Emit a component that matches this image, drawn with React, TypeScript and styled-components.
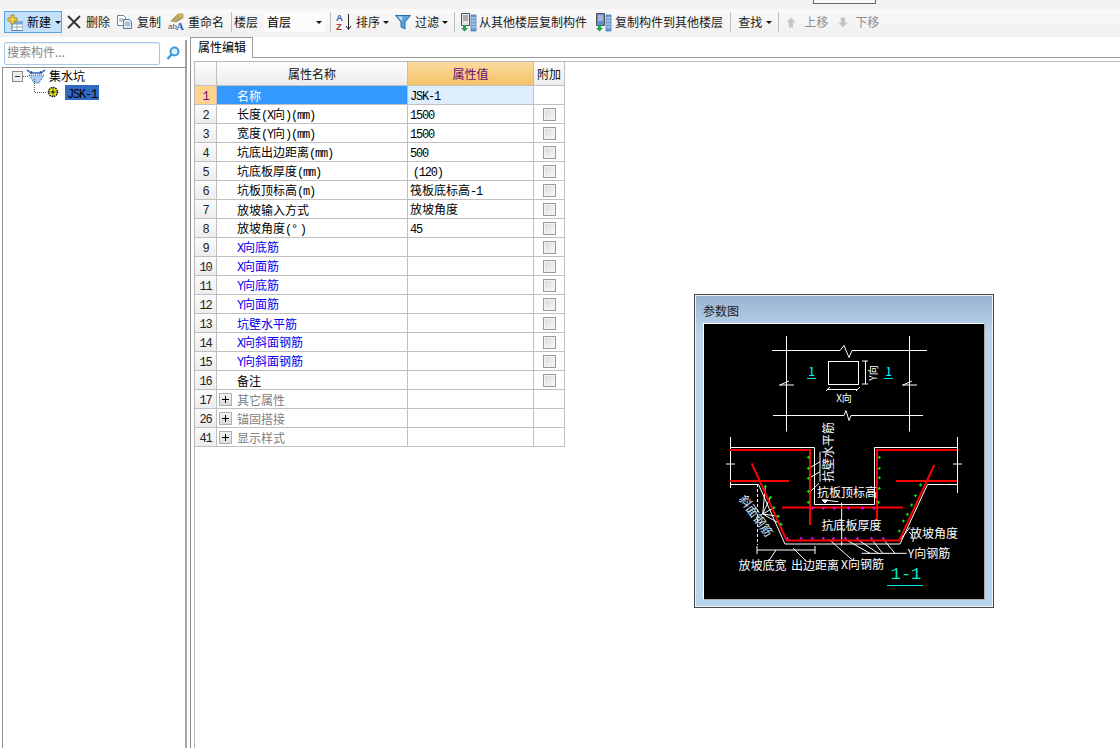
import React from "react";
import styled, { createGlobalStyle } from "styled-components";

const CJK = `"Noto Sans CJK SC", "Liberation Sans", sans-serif`;

const Global = createGlobalStyle`
  html, body { margin: 0; padding: 0; background: #fff; }
  #root { width: 1120px; height: 748px; overflow: hidden; }
  * { box-sizing: border-box; }
`;

const Page = styled.div`
  width: 1120px; height: 748px; display: flex; flex-direction: column;
  font: 12px/16px ${CJK}; color: #000; background: #fff; overflow: hidden;
`;
const TopStrip = styled.div`
  height: 9px; background: #f2f2f2; flex: none; padding-left: 813px;
`;
const WindowTab = styled.div`
  width: 63px; height: 4px; border: 1px solid #666; border-top: 0; background: #f8f8f8;
`;
const Toolbar = styled.div`
  height: 28px; flex: none; display: flex; align-items: center; padding-bottom: 2px;
  background: linear-gradient(#f9f9f9, #f0f0f0);
`;
const NewButton = styled.div`
  width: 58px; height: 22px; margin-left: 4px; display: flex; align-items: center; gap: 4px;
  padding-left: 2px; border: 1px solid #5aa2e0; background: #c4e1fb;
`;
const Tool = styled.div<{ $ml: number; $gap: number; $off?: boolean }>`
  display: flex; align-items: center; flex: none;
  margin-left: ${(p) => p.$ml}px; gap: ${(p) => p.$gap}px;
  color: ${(p) => (p.$off ? "#8e8e8e" : "#1a1a1a")};
  white-space: nowrap;
`;
const Caret = styled.span<{ $ml?: number }>`
  width: 0; height: 0; flex: none; margin-left: ${(p) => p.$ml ?? 0}px; margin-top: 1px;
  border-left: 3px solid transparent; border-right: 3px solid transparent; border-top: 3px solid #111;
`;
const Sep = styled.span<{ $ml: number }>`
  width: 1px; height: 20px; flex: none; margin-left: ${(p) => p.$ml}px; background: #bdbdbd;
`;
const Combo = styled.div`
  width: 62px; height: 20px; margin-left: 6px; padding: 0 4px 0 3px; flex: none;
  display: flex; align-items: center; justify-content: space-between; background: #fcfcfc;
`;
const Body = styled.div`
  flex: 1; display: flex; min-height: 0;
`;
const LeftColumn = styled.div`
  width: 187px; flex: none; margin-top: 3px; display: flex; flex-direction: column;
  border-right: 2px solid #a2a2a2;
`;
const SearchRow = styled.div`
  height: 25px; flex: none; display: flex; align-items: center; padding: 2px 0 0 4px; gap: 6px;
`;
const SearchBox = styled.div`
  width: 156px; height: 23px; padding: 0 0 3px 2px; display: flex; align-items: center;
  border: 1px solid #a8c8e6; border-radius: 2px; color: #868686; font-size: 12px;
  box-shadow: inset 0 1px 1px #e6eef6;
`;
const Tree = styled.div`
  flex: 1; margin: 2px 0 0 2px; border-top: 1px solid #8f8f8f; border-left: 1px solid #8f8f8f;
  display: flex; flex-direction: column;
`;
const TreeRow = styled.div<{ $pl: number }>`
  display: flex; align-items: center; padding-left: ${(p) => p.$pl}px; flex: none;
  height: ${(p) => (p.$pl > 20 ? 15 : 17)}px; white-space: nowrap;
`;
const TreeName = styled.span`
  padding-bottom: 1px; font-size: 12px;
`;
const Selected = styled.span`
  margin-left: 6px; width: 34px; height: 15px; line-height: 15px; padding-left: 2px; background: #316ac5; color: #000;
`;
const Main = styled.div`
  flex: 1; margin-left: 3px; position: relative; display: flex; flex-direction: column; min-width: 0;
`;
const TabStrip = styled.div`
  height: 21px; flex: none; display: flex; align-items: flex-end;
  border-bottom: 1px solid #9a9a9a;
`;
const Tab = styled.div`
  width: 63px; height: 21px; margin-bottom: -1px; padding-left: 7px; line-height: 18px;
  background: #fff; border: 1px solid #9a9a9a; border-bottom: 0; font-size: 12px;
`;
const Pane = styled.div`
  flex: 1; border-left: 1px solid #8a8a8a; padding: 3px 0 0 3px; min-height: 0; display: flex;
`;
const Sheet = styled.div`
  flex: 1; border-top: 1px solid #b8b8b8; border-left: 1px solid #b8b8b8; background: #fff;
`;
const Grid = styled.table`
  border-collapse: separate; border-spacing: 0; table-layout: fixed; width: 370px;
`;
const HeadCell = styled.th<{ $w: number; $hot?: boolean }>`
  width: ${(p) => p.$w}px; height: 24px; padding: 0; font-weight: 400; font-size: 12px;
  border-right: 1px solid #c0c0c0; border-bottom: 1px solid #c0c0c0;
  color: ${(p) => (p.$hot ? "#6a0a78" : "#111")};
  background: ${(p) => (p.$hot ? "linear-gradient(#fbdba0, #f3c266)" : "linear-gradient(#fdfdfd, #ececec)")};
`;
const NumCell = styled.td<{ $hot?: boolean }>`
  height: 19px; padding: 0; text-align: center; line-height: 14px;
  border-right: 1px solid #c0c0c0; border-bottom: 1px solid #c0c0c0;
  color: ${(p) => (p.$hot ? "#6a0a78" : "#222")};
  background: ${(p) => (p.$hot ? "#fdd38d" : "linear-gradient(#fbfbfb, #ededed)")};
`;
const NameCell = styled.td<{ $tone: "plain" | "link" | "group" | "active" }>`
  height: 19px; padding: 1px 0 0 ${(p) => (p.$tone === "group" ? 2 : 20)}px; line-height: 14px; white-space: pre;
  border-right: 1px solid #c0c0c0; border-bottom: 1px solid #c0c0c0;
  background: ${(p) => (p.$tone === "active" ? "#3399ff" : "#fff")};
  color: ${(p) => ({ plain: "#000", link: "#0000ee", group: "#808080", active: "#fff" }[p.$tone])};
`;
const GroupLabel = styled.div`
  display: flex; align-items: center; gap: 5px; height: 15px;
`;
const Expander = styled.span`
  width: 13px; height: 13px; flex: none; position: relative; border: 1px solid #b0b0b0;
  background: linear-gradient(#f4f4f4, #dcdcdc);
  &::before { content: ""; position: absolute; left: 2px; top: 5px; width: 7px; height: 1px; background: #000; }
  &::after { content: ""; position: absolute; left: 5px; top: 2px; width: 1px; height: 7px; background: #000; }
`;
const ValueCell = styled.td<{ $active?: boolean }>`
  height: 19px; padding: 0 0 0 2px; line-height: 14px; white-space: pre; color: #000;
  border-right: 1px solid #c0c0c0; border-bottom: 1px solid #c0c0c0;
  background: ${(p) => (p.$active ? "#deeeff" : "#fff")};
`;
const ExtraCell = styled.td`
  height: 19px; padding: 0; text-align: center; vertical-align: middle;
  border-right: 1px solid #c0c0c0; border-bottom: 1px solid #c0c0c0;
`;
const Check = styled.span`
  display: block; width: 13px; height: 13px; margin: 1px auto 0; border: 1px solid #9a9a9a;
  background: linear-gradient(135deg, #d8d8d8, #fafafa); box-shadow: inset 0 0 0 1px #f4f4f4;
`;
const Latin = styled.span`
  font-family: "Liberation Mono", monospace; font-size: 12px; letter-spacing: -1.2px; line-height: 1;
`;
const ParamWindow = styled.div`
  position: absolute; left: 504px; top: 257px; width: 300px; height: 314px;
  padding: 0 8px 8px; display: flex; flex-direction: column;
  border: 1px solid #4c4c4c; box-shadow: inset 0 0 0 1px #e8f2fb;
  background: linear-gradient(#98b3d2, #bad3ea 12%, #b9d5ee);
`;
const ParamTitle = styled.div`
  height: 28px; flex: none; line-height: 32px; color: #222; font-size: 12px;
`;
const ParamView = styled.div`
  flex: 1; background: #000; border: 1px solid; border-color: #fff #a8a8a8 #a8a8a8 #fff;
`;
const Drawing = styled.svg`
  display: block; width: 100%; height: 100%;
`;
const DrawText = styled.text`
  font-family: ${CJK}; font-size: 12px; fill: #fff; text-anchor: middle;
`;

const Txt = ({ children }: { children: string }) => (
  <>
    {children.split(/([\x21-\x7e\u00b0]+)/).map((s, i) =>
      /^[\x21-\x7e\u00b0]+$/.test(s) ? <Latin key={i}>{s}</Latin> : s
    )}
  </>
);

const IconNew = () => (
  <svg width="16" height="17" viewBox="0 0 16 17">
    <rect x="5" y="8" width="11" height="8.5" fill="#fff" stroke="#5b7fa8" />
    <rect x="5" y="8" width="11" height="2.5" fill="#7ba4d4" />
    <path d="M5 13h11M10 10v6" stroke="#9ab" />
    <path d="M4 1h3v3h3v3H7v3H4V7H1V4h3z" fill="#f7d64a" stroke="#a98a1c" />
  </svg>
);
const IconX = () => (
  <svg width="14" height="14" viewBox="0 0 14 14">
    <path d="M1 1l12 12M13 1L1 13" stroke="#333" strokeWidth="1.8" />
  </svg>
);
const IconCopy = () => (
  <svg width="15" height="14" viewBox="0 0 15 14">
    <path d="M.5.5h6l2 2v8h-8z" fill="#fff" stroke="#6d7f96" />
    <path d="M6.5 4.5h6l2 2v7h-8z" fill="#dde8f5" stroke="#5b7fa8" />
    <path d="M2 4h4M2 6h4M8 8h5M8 10h5" stroke="#7d93ad" />
  </svg>
);
const IconRename = () => (
  <svg width="16" height="18" viewBox="0 0 16 18">
    <path d="M3 8L10 1h5v4l-7 4z" fill="#d9b44a" stroke="#8a7a40" strokeWidth=".6" />
    <path d="M5 7l6-4M8 8l5-3" stroke="#6f8f9a" />
    <text x="0" y="16" fontSize="8" fontFamily="Liberation Sans" fill="#555">ab</text>
    <text x="8" y="17" fontSize="11" fontWeight="700" fontFamily="Liberation Serif" fill="#2b62b0">A</text>
  </svg>
);
const IconSort = () => (
  <svg width="17" height="18" viewBox="0 0 17 18">
    <text x="0" y="8" fontSize="9.5" fontWeight="700" fontFamily="Liberation Sans" fill="#2b62b0">A</text>
    <text x="0" y="17" fontSize="9.5" fontWeight="700" fontFamily="Liberation Sans" fill="#a33a3a">Z</text>
    <path d="M12.500 1v15M10 13l2.500 3.500L15 13" fill="none" stroke="#222" />
  </svg>
);
const IconFunnel = () => (
  <svg width="16" height="16" viewBox="0 0 16 16">
    <path d="M.5 1.500h15L10 8v7L6 13V8z" fill="#5ba3dc" stroke="#2d6ea6" />
    <path d="M2.500 2.500h5L7 7z" fill="#bfe0f6" />
  </svg>
);
const IconFloors = ({ down }: { down?: boolean }) => (
  <svg width="17" height="19" viewBox="0 0 17 19">
    <path d="M1.500.5h8v12h-8z" fill={down ? "#5f8fd0" : "#e4e4e4"} stroke="#555" />
    <path d="M3 3h5M3 5h5M3 7h5" stroke={down ? "#dde" : "#777"} />
    <path d="M11 2h5v16h-5z" fill="#6f9fd8" stroke="#3c6ba8" strokeWidth=".7" />
    <path d="M11 5h5M11 8h5M11 11h5M11 14h5" stroke="#fff" strokeWidth=".6" />
    <path d="M3 12h3v3h2l-3.500 3.500L1 15h2z" fill="#2aa14a" />
  </svg>
);
const IconMove = ({ up }: { up?: boolean }) => (
  <svg width="10" height="11" viewBox="0 0 10 11">
    <path d={up ? "M5 .5L9.500 5.500H7v5H3v-5H.5z" : "M5 10.500L9.500 5.500H7v-5H3v5H.5z"} fill="#c4c4c4" stroke="#d8d8d8" strokeWidth=".5" />
  </svg>
);
const IconSearch = () => (
  <svg width="14" height="15" viewBox="0 0 14 15">
    <circle cx="8.500" cy="5.500" r="4" fill="#d8eefc" stroke="#3f97d8" strokeWidth="2" />
    <path d="M5.500 8.500L1.500 13" stroke="#3f97d8" strokeWidth="2.400" />
  </svg>
);
const TreeBranch = () => (
  <svg width="37" height="17" viewBox="0 0 37 17" style={{ flex: "none" }}>
    <rect x=".5" y="3.500" width="10" height="10" fill="#eee" stroke="#888" />
    <path d="M3 8.500h5" stroke="#333" />
    <path d="M11 8.500h5" stroke="#666" strokeDasharray="1 1" />
    <path d="M15 2l4 3h10l4-3" fill="none" stroke="#2a5fb0" strokeWidth="1.500" />
    <path d="M19.500 3v3M28.500 3v3" stroke="#2a5fb0" strokeWidth="1.500" />
    <path d="M17 7h15l-5 8h-5z" fill="#a9cdf0" stroke="#2a5fb0" strokeDasharray="1 1" />
  </svg>
);
const TreeLeaf = () => (
  <svg width="25" height="15" viewBox="0 0 25 15" overflow="visible" style={{ flex: "none" }}>
    <path d="M.5-6v13.500H12" fill="none" stroke="#555" strokeDasharray="1 1" />
    <circle cx="19" cy="7" r="4.500" fill="#f6ec1e" stroke="#222" strokeDasharray="1.500 .8" strokeWidth="1.600" />
    <circle cx="19" cy="7" r="1.500" fill="#333" />
    <path d="M14 7h10M19 2v10" stroke="#222" strokeWidth=".6" />
  </svg>
);

type Row = [string, string, string, "plain" | "link" | "active", boolean];
const rows: Row[] = [
  ["1", "名称", "JSK-1", "active", false],
  ["2", "长度(X向)(mm)", "1500", "plain", true],
  ["3", "宽度(Y向)(mm)", "1500", "plain", true],
  ["4", "坑底出边距离(mm)", "500", "plain", true],
  ["5", "坑底板厚度(mm)", " (120)", "plain", true],
  ["6", "坑板顶标高(m)", "筏板底标高-1", "plain", true],
  ["7", "放坡输入方式", "放坡角度", "plain", true],
  ["8", "放坡角度(° )", "45", "plain", true],
  ["9", "X向底筋", "", "link", true],
  ["10", "X向面筋", "", "link", true],
  ["11", "Y向底筋", "", "link", true],
  ["12", "Y向面筋", "", "link", true],
  ["13", "坑壁水平筋", "", "link", true],
  ["14", "X向斜面钢筋", "", "link", true],
  ["15", "Y向斜面钢筋", "", "link", true],
  ["16", "备注", "", "plain", true],
];
const groups = [["17", "其它属性"], ["26", "锚固搭接"], ["41", "显示样式"]];

const z = (x: number, y: number) => `${690 + x / 3} ${440 + y / 3}`;
const greens = [[355,52],[355,85],[355,115],[355,154],[355,187],[568,52],[568,85],[568,113],[568,145],[565,187],[226,139],[241,172],[252,203],[265,229],[273,253],[691,135],[676,167],[665,195],[652,223],[640,243],[628,273]];
const pinks = [[367,205],[400,205],[433,205],[475,205],[517,205],[552,205],[292,295],[333,295],[367,295],[400,295],[430,295],[466,295],[502,295],[545,295],[580,295]];
const Plus = ({ at, color }: { at: number[]; color: string }) => {
  const x = 690 + at[0] / 3, y = 440 + at[1] / 3;
  return <path d={`M${x - 1.5} ${y}h3M${x} ${y - 1.5}v3`} stroke={color} fill="none" />;
};
const leaders = [
  [390,35,390,125],[390,65,357,85],[390,95,357,115],[387,130,357,158],
  [218,222,226,139],[218,222,241,172],[218,222,252,203],[218,222,265,229],[218,222,273,253],
  [515,340,650,340],[466,298,540,340],[502,298,565,340],[545,298,578,340],[580,298,615,340],
  [417,298,487,360],[455,188,455,316],[400,180,445,185],
  [258,330,235,365],[310,325,350,365],[630,300,660,262],
];

const ParamDrawing = () => (
  <Drawing viewBox="704 324 280 275">
    <g stroke="#fff" fill="none" strokeWidth="1">
      <path d="M772 350.500H840l4-5 5 12 3-7H927M773 415.500H844l2-5 3 10 2-5H923" />
      <path d="M786.500 336V431.500M909.500 336V431.500M779 385h15M902 385h15M780 385l9-4M903 385l9-4" />
      <rect x="828.500" y="361.500" width="30" height="23" />
      <path d="M828 389.500h30M826 391l4-4M856 391l4-4M865.500 361v23M862 361h6M862 384h6" />
      <path d="M730.500 437V488M730.500 447.500H814.500V504.500H874.500V447.500H957.500M957.500 437V493" />
      <path d="M730 484.500H758.500L785 544H900L927.500 484.500H957" />
      <path d="M726 464h9M953 464h9" strokeWidth="1" />
      <path d="M757.500 484V545" strokeDasharray="3 2" />
      <path d="M757 550H815M757 546v8M815 546v8" />
      {leaders.map((l, i) => (
        <path key={i} d={`M${z(l[0], l[1])}L${z(l[2], l[3])}`} />
      ))}
      <path d="M909 532a10 10 0 0 1 4 10" />
      <path d="M825 503l-3-3h6z" fill="#fff" />
    </g>
    <g stroke="#ff0000" fill="none" strokeWidth="2">
      <path d="M730 450H810V525M957 450H877V521M730 481H789M896 481H957M782 507.500H903" />
      <path d="M751.700 463.300L786.700 540.500H899.300L934.300 465" />
    </g>
    {greens.map((g, i) => <Plus key={i} at={g} color="#00ff00" />)}
    {pinks.map((g, i) => <Plus key={i} at={g} color="#ff00ff" />)}
    <path d="M807 378.500h9M884 378.500h9M887 585.500h36" stroke="#00e6e6" fill="none" />
    <DrawText x="811.500" y="376" style={{ fill: "#00ffff" }}>1</DrawText>
    <DrawText x="888.500" y="376" style={{ fill: "#00ffff" }}>1</DrawText>
    <DrawText x="844" y="402" style={{ fontSize: 10 }}>X向</DrawText>
    <DrawText x="873" y="377" transform="rotate(-90 873 373)" style={{ fontSize: 10 }}>Y向</DrawText>
    <DrawText x="829" y="456" transform="rotate(-90 829 452)">抗壁水平筋</DrawText>
    <DrawText x="847" y="497">抗板顶标高</DrawText>
    <DrawText x="851.500" y="530">抗底板厚度</DrawText>
    <DrawText x="934" y="538">放坡角度</DrawText>
    <DrawText x="929" y="558">Y向钢筋</DrawText>
    <DrawText x="762.500" y="570">放坡底宽</DrawText>
    <DrawText x="815" y="570">出边距离</DrawText>
    <DrawText x="862.500" y="569">X向钢筋</DrawText>
    <DrawText x="906" y="579" style={{ fill: "#00e6c8", fontSize: 17, fontFamily: "Liberation Mono" }}>1-1</DrawText>
    <DrawText x="755.800" y="520" transform="rotate(54 755.800 516)" style={{ fill: "#cfe6ff" }}>斜面钢筋</DrawText>
  </Drawing>
);

export default function App() {
  return (
    <Page>
      <Global />
      <TopStrip><WindowTab /></TopStrip>
      <Toolbar>
        <NewButton><IconNew />新建<Caret /></NewButton>
        <Tool $ml={5} $gap={5}><IconX />删除</Tool>
        <Tool $ml={7} $gap={5}><IconCopy />复制</Tool>
        <Tool $ml={7} $gap={4}><IconRename />重命名</Tool>
        <Sep $ml={7} />
        <Tool $ml={2} $gap={0}>楼层</Tool>
        <Combo>首层<Caret /></Combo>
        <Sep $ml={4} />
        <Tool $ml={5} $gap={3}><IconSort />排序<Caret /></Tool>
        <Tool $ml={6} $gap={4}><IconFunnel />过滤<Caret $ml={-1} /></Tool>
        <Sep $ml={6} />
        <Tool $ml={5} $gap={2}><IconFloors />从其他楼层复制构件</Tool>
        <Tool $ml={8} $gap={3}><IconFloors down />复制构件到其他楼层</Tool>
        <Sep $ml={7} />
        <Tool $ml={7} $gap={4}>查找<Caret /></Tool>
        <Sep $ml={6} />
        <Tool $ml={7} $gap={8} $off><IconMove up />上移</Tool>
        <Tool $ml={10} $gap={7} $off><IconMove />下移</Tool>
      </Toolbar>
      <Body>
        <LeftColumn>
          <SearchRow>
            <SearchBox>搜索构件...</SearchBox>
            <IconSearch />
          </SearchRow>
          <Tree>
            <TreeRow $pl={9}><TreeBranch /><TreeName>集水坑</TreeName></TreeRow>
            <TreeRow $pl={31}><TreeLeaf /><Selected><Latin>JSK-1</Latin></Selected></TreeRow>
          </Tree>
        </LeftColumn>
        <Main>
          <TabStrip><Tab>属性编辑</Tab></TabStrip>
          <Pane>
            <Sheet>
              <Grid>
                <thead>
                  <tr>
                    <HeadCell $w={22} />
                    <HeadCell $w={191}>属性名称</HeadCell>
                    <HeadCell $w={126} $hot>属性值</HeadCell>
                    <HeadCell $w={31}>附加</HeadCell>
                  </tr>
                </thead>
                <tbody>
                  {rows.map(([n, name, value, tone, check]) => (
                    <tr key={n}>
                      <NumCell $hot={tone === "active"}><Txt>{n}</Txt></NumCell>
                      <NameCell $tone={tone}><Txt>{name}</Txt></NameCell>
                      <ValueCell $active={tone === "active"}><Txt>{value}</Txt></ValueCell>
                      <ExtraCell>{check && <Check />}</ExtraCell>
                    </tr>
                  ))}
                  {groups.map(([n, name]) => (
                    <tr key={n}>
                      <NumCell><Txt>{n}</Txt></NumCell>
                      <NameCell $tone="group"><GroupLabel><Expander />{name}</GroupLabel></NameCell>
                      <ValueCell />
                      <ExtraCell />
                    </tr>
                  ))}
                </tbody>
              </Grid>
            </Sheet>
          </Pane>
          <ParamWindow>
            <ParamTitle>参数图</ParamTitle>
            <ParamView><ParamDrawing /></ParamView>
          </ParamWindow>
        </Main>
      </Body>
    </Page>
  );
}
